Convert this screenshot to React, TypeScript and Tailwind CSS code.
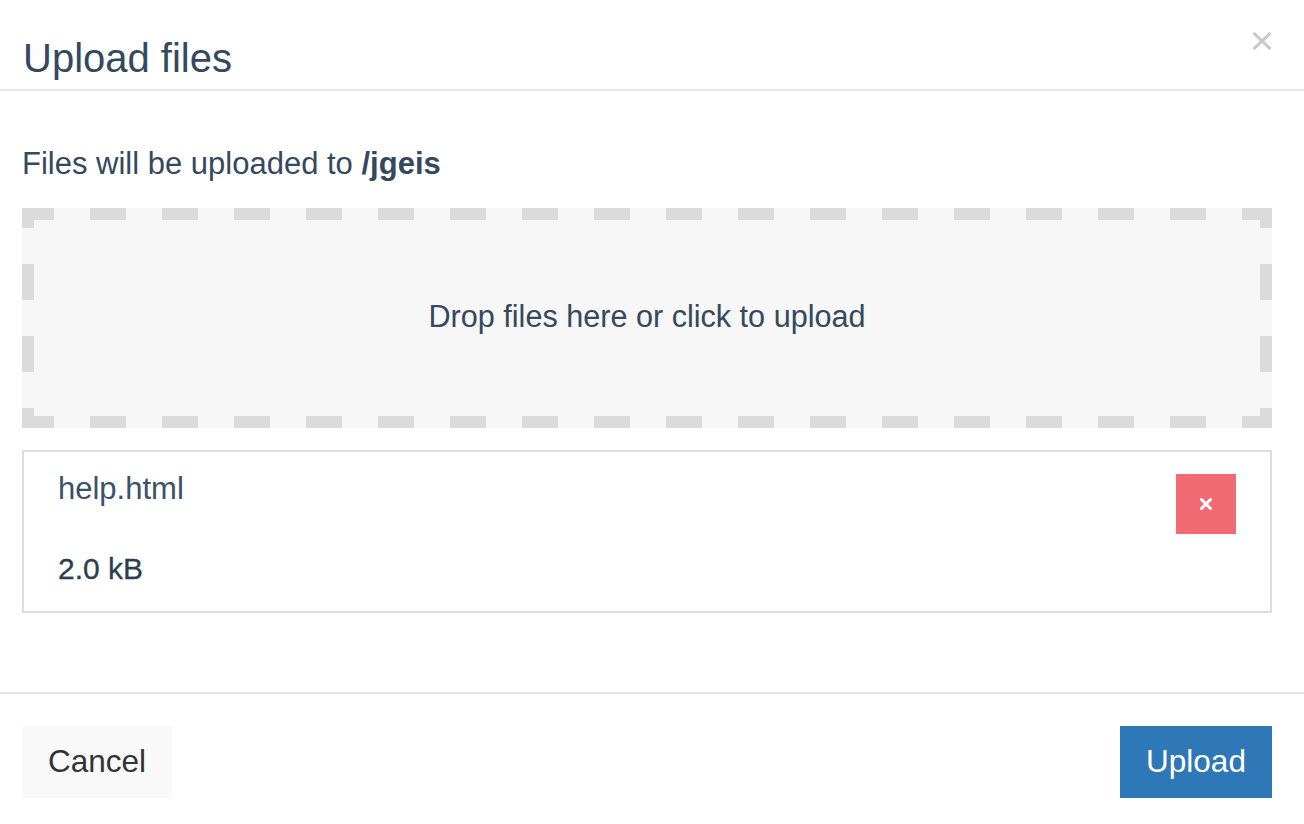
import { X } from "lucide-react";

const font = "font-['Liberation_Sans',Arial,sans-serif]";

function CloseIcon() {
  return (
    <svg width="20" height="18" viewBox="0 0 20 18" className="text-[#c8c8c8]">
      <path d="M1.5 1 L18.5 17 M18.5 1 L1.5 17" stroke="currentColor" strokeWidth="3" />
    </svg>
  );
}

// dashed frame drawn on top of the drop zone
function DashFrame() {
  const c = "#dbdbdb";
  return (
    <svg width="1250" height="220" className="absolute inset-0 pointer-events-none">
      <line x1="0" y1="6" x2="1250" y2="6" stroke={c} strokeWidth="12" strokeDasharray="36 36" strokeDashoffset="4" />
      <line x1="0" y1="214" x2="1250" y2="214" stroke={c} strokeWidth="12" strokeDasharray="36 36" strokeDashoffset="4" />
      <line x1="6" y1="0" x2="6" y2="220" stroke={c} strokeWidth="12" strokeDasharray="36 36" strokeDashoffset="16" />
      <line x1="1244" y1="0" x2="1244" y2="220" stroke={c} strokeWidth="12" strokeDasharray="36 36" strokeDashoffset="16" />
    </svg>
  );
}

export default function App() {
  return (
    <div className={`${font} w-[1304px] h-[824px] bg-white text-[#34495e] flex flex-col`}>
      {/* header */}
      <div className="h-[91px] border-b-2 border-[#e6e6e6] flex justify-between pl-[23px] pr-[32px]">
        <h1 className="pt-[38px] text-[40px] leading-[40px] font-normal">Upload files</h1>
        <button className="mt-[32px] h-[18px]">
          <CloseIcon />
        </button>
      </div>

      {/* body */}
      <div className="pl-[22px] pr-[32px] pt-[59px] h-[601px] flex flex-col">
        <p className="text-[31px] leading-[28px]">
          Files will be uploaded to <span className="font-bold">/jgeis</span>
        </p>

        <div className="relative mt-[30px] h-[220px] bg-[#f7f7f7] flex items-center justify-center">
          <DashFrame />
          <span className="text-[30.6px] leading-[30px] -mt-[4px]">Drop files here or click to upload</span>
        </div>

        <div className="mt-[22px] h-[163px] border-2 border-[#dddddd] px-[34px] pt-[22px] flex justify-between">
          <div className="flex flex-col">
            <span className="text-[31px] leading-[30px] text-[#3d5168]">help.html</span>
            <span className="mt-[50px] text-[30px] leading-[30px] text-[#2c3e50] [-webkit-text-stroke:0.3px_#2c3e50]">2.0 kB</span>
          </div>
          <button className="w-[60px] h-[60px] bg-[#f06b73] flex items-center justify-center">
            <X size={18} strokeWidth={4} className="text-white" />
          </button>
        </div>
      </div>

      {/* footer */}
      <div className="border-t-2 border-[#e6e6e6] pl-[22px] pr-[32px] pt-[32px] flex justify-between">
        <button className="w-[150px] h-[72px] bg-[#f9f9f9] text-[#333333] text-[31.5px]">Cancel</button>
        <button className="w-[152px] h-[72px] bg-[#2e78b8] text-white text-[31.5px]">Upload</button>
      </div>
    </div>
  );
}
